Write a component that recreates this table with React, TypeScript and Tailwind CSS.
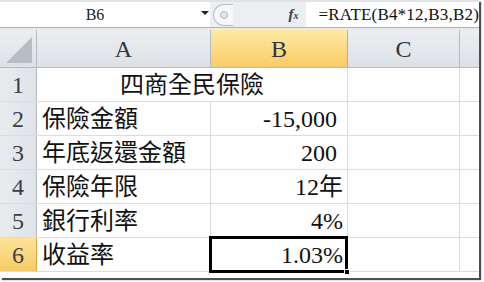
const serif = "font-['Liberation_Serif','Noto_Sans_CJK_TC',serif]";

type Row = { n: number; a?: string; b?: string; bPad?: string; title?: string };

const rows: Row[] = [
  { n: 1, title: "四商全民保險" },
  { n: 2, a: "保險金額", b: "-15,000", bPad: "pr-[10px]" },
  { n: 3, a: "年底返還金額", b: "200", bPad: "pr-[10px]" },
  { n: 4, a: "保險年限", b: "12年", bPad: "pr-[4px]" },
  { n: 5, a: "銀行利率", b: "4%", bPad: "pr-[4px]" },
  { n: 6, a: "收益率", b: "1.03%", bPad: "pr-[4px]" },
];

const FormulaBar = () => {
  return (
    <div className="flex h-[27px] border-t-2 border-[#dfe2e6] bg-[#eceef1]">
      <div className="relative flex w-[214px] items-center bg-white">
        <span className={`w-[190px] text-center text-[16px] text-[#222] ${serif}`}>B6</span>
        <span className="absolute left-[201px] top-[9px] h-0 w-0 border-x-[4px] border-t-[4px] border-x-transparent border-t-[#222]" />
      </div>
      <div className="flex w-[98px] items-center">
        <div className="ml-[3px] flex h-[22px] w-[20px] items-center justify-center rounded-l-full border border-r-0 border-[#b9bec6] bg-[#f6f7f8]">
          <span className="h-[8px] w-[8px] rounded-full border border-[#b3b8bf] bg-[#e2e5e9]" />
        </div>
        <span className={`ml-auto mr-[8px] text-[15px] font-bold italic text-[#3c3c3c] ${serif}`}>
          f<span className="text-[10px]">x</span>
        </span>
      </div>
      <div className="flex flex-1 items-center bg-white pl-[12px]">
        <span className={`text-[17px] tracking-[0.2px] text-[#111] ${serif}`}>=RATE(B4*12,B3,B2)</span>
      </div>
    </div>
  );
};

const HeaderRow = () => {
  const col = `flex items-center justify-center border-r border-[#b5bac1] text-[24px] text-[#2f3540] ${serif}`;
  return (
    <div className="flex h-[38px] border-b border-[#b5bac1] bg-gradient-to-b from-[#eceef1] to-[#dde1e6]">
      <div className="relative w-[37px] border-r border-[#b5bac1]">
        <div className="absolute bottom-[4px] right-[4px] h-0 w-0 border-b-[26px] border-l-[26px] border-b-[#b8bdc4] border-l-transparent" />
      </div>
      <div className={`${col} w-[174px]`}>A</div>
      <div className={`${col} w-[137px] border-[#e2a843] bg-gradient-to-b from-[#fde9a4] to-[#f8cd62]`}>B</div>
      <div className={`${col} w-[112px]`}>C</div>
      <div className="flex-1" />
    </div>
  );
};

const SheetRow = ({ row }: { row: Row }) => {
  const active = row.n === 6;
  return (
    <div className="flex h-[34px] border-b border-[#dadcdf]">
      <div
        className={`flex w-[37px] items-center justify-center border-r text-[24px] text-[#3a3f47] ${serif} ${
          active
            ? "border-[#e2a843] bg-gradient-to-b from-[#fde39a] to-[#f7cc63]"
            : "border-[#b5bac1] bg-gradient-to-r from-[#e9ecef] to-[#dfe3e7]"
        }`}
      >
        {row.n}
      </div>
      {row.title ? (
        <div className={`flex w-[311px] items-center justify-center border-r border-[#dadcdf] text-[24px] text-[#111] ${serif}`}>
          {row.title}
        </div>
      ) : (
        <>
          <div className={`flex w-[174px] items-center border-r border-[#dadcdf] pl-[5px] text-[24px] text-[#111] ${serif}`}>
            {row.a}
          </div>
          <div
            className={`relative flex w-[137px] items-center justify-end border-r border-[#dadcdf] text-[24px] text-[#111] ${row.bPad} ${serif}`}
          >
            {row.b}
            {active && (
              <>
                <div className="absolute -left-[2px] -top-[2px] h-[37px] w-[139px] border-[3px] border-black" />
                <div className="absolute -bottom-[4px] -right-[3px] h-[6px] w-[6px] border border-white bg-black" />
              </>
            )}
          </div>
        </>
      )}
      <div className="w-[112px] border-r border-[#dadcdf]" />
      <div className="flex-1" />
    </div>
  );
};

export default function App() {
  return (
    <div className="h-[282px] w-[484px] bg-white">
      <div className="h-[278px] w-[479px] overflow-hidden bg-white shadow-[2px_2px_1px_#4f4f4f]">
        <FormulaBar />
        <div className="h-[3px] border-t border-[#b0b5bc] bg-[#e8eaed]" />
        <HeaderRow />
        {rows.map((r) => (
          <SheetRow key={r.n} row={r} />
        ))}
      </div>
    </div>
  );
}
